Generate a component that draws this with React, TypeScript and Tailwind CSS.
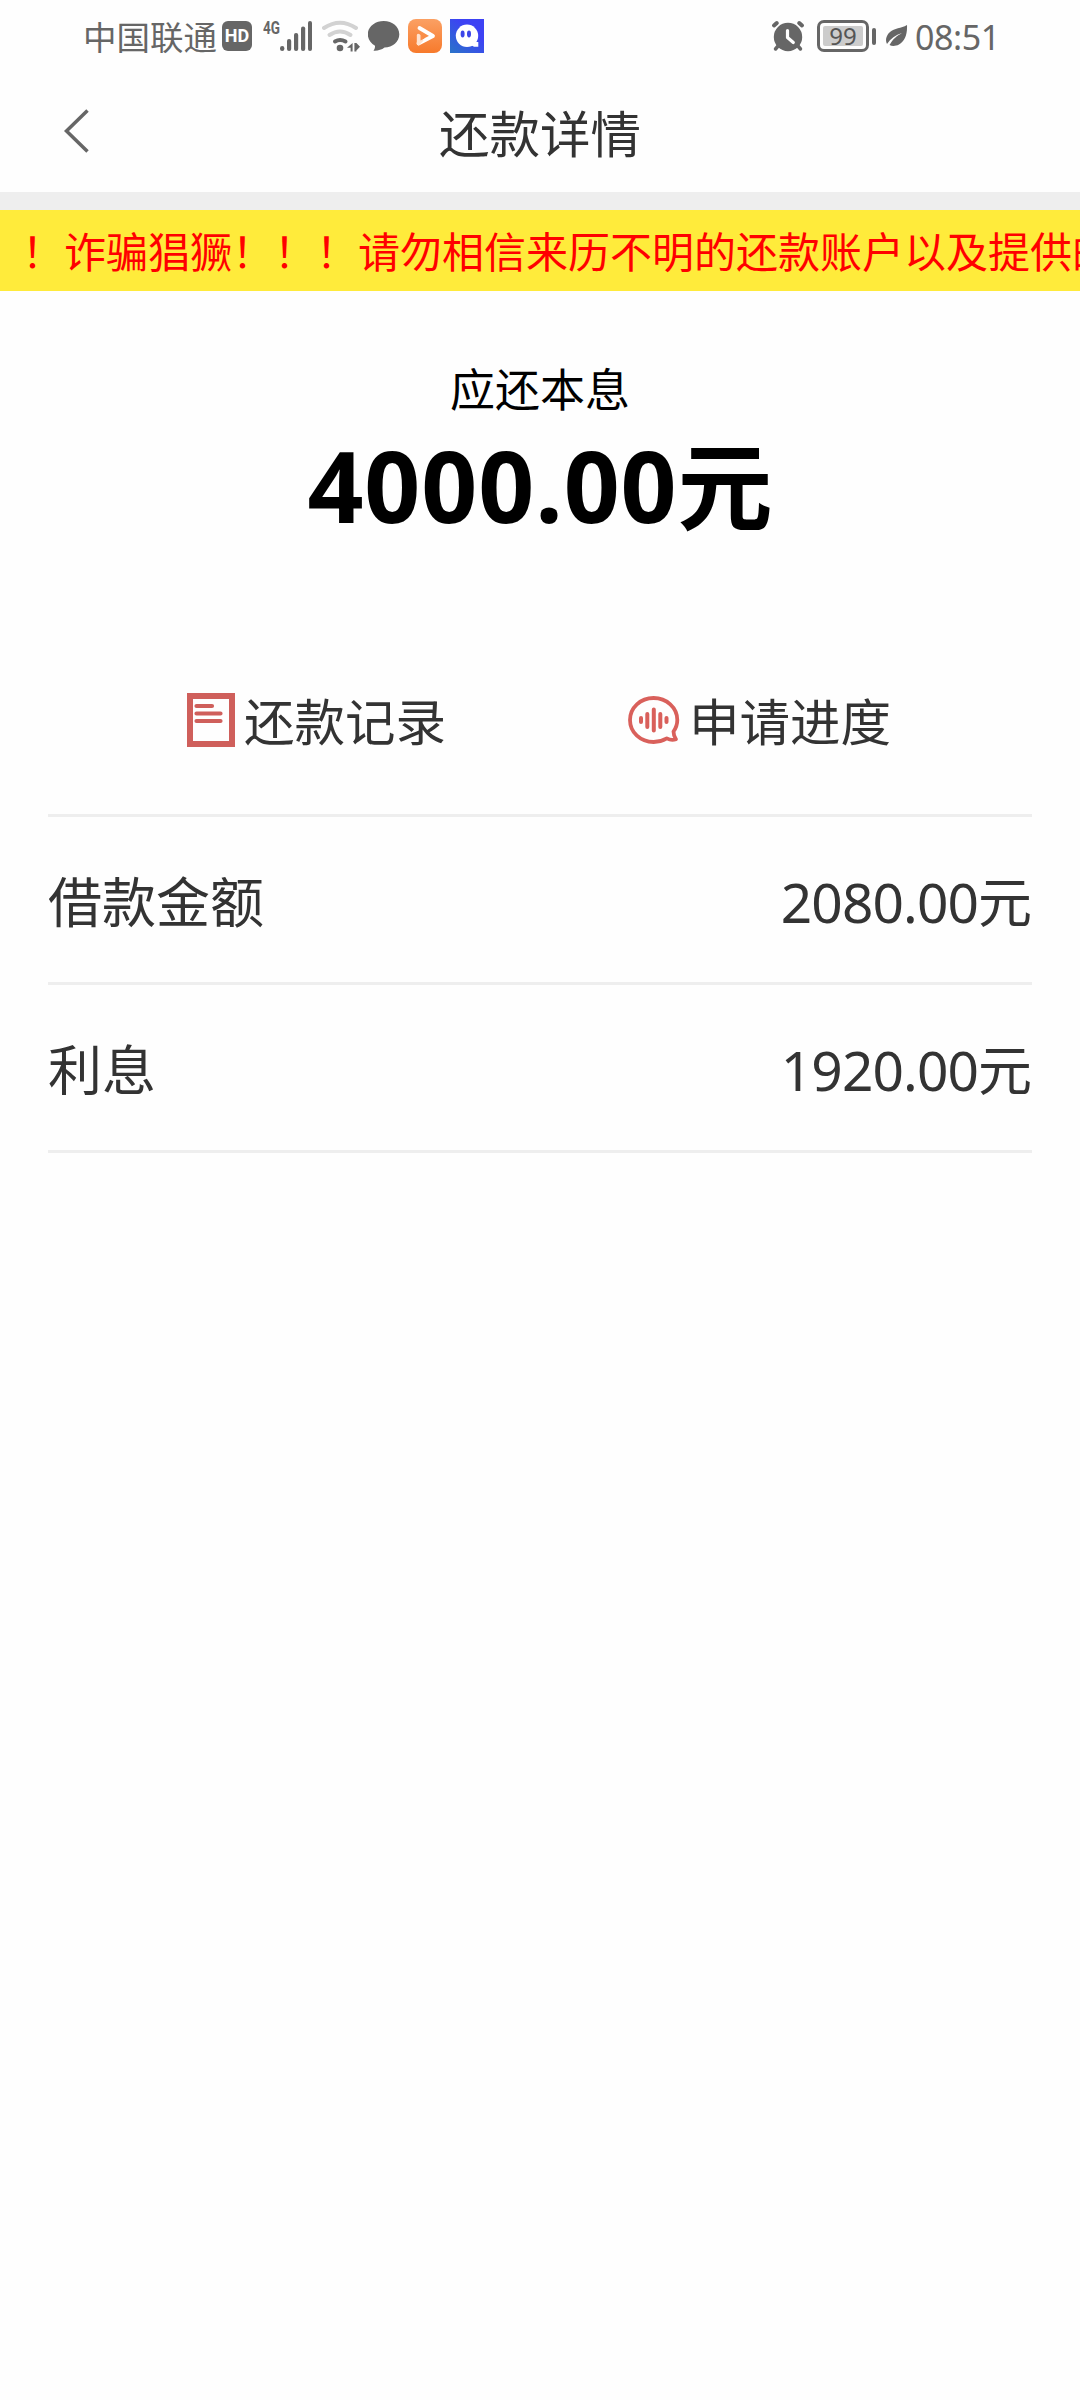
import React from "react";

const ROWS = [
  { label: "借款金额", value: "2080.00" },
  { label: "利息", value: "1920.00" },
];

const NOTICE = "！诈骗猖獗！！！请勿相信来历不明的还款账户以及提供的";

function SignalIcon() {
  return (
    <svg className="w-8 h-[30px]" viewBox="280 21 32 30" fill="#666">
      <rect x="280" y="46" width="4.4" height="5" rx="2.2" />
      <rect x="287" y="39" width="4.2" height="12" rx="2" />
      <rect x="294" y="33" width="4.2" height="18" rx="2" />
      <rect x="301" y="26.5" width="4.2" height="24.5" rx="2" />
      <rect x="308" y="21" width="4" height="30" rx="2" />
    </svg>
  );
}

function WifiIcon() {
  return (
    <svg className="w-[38px] h-8" viewBox="322 20 38 32" fill="none" strokeLinecap="round">
      <path d="M324 28Q340 17.500 356 28" stroke="#d2d2d2" strokeWidth="4" />
      <path d="M329.500 35Q340 28 350.500 35" stroke="#d2d2d2" strokeWidth="4" />
      <path d="M335 41.500Q340 38.500 345.500 41.500" stroke="#666" strokeWidth="4" />
      <circle cx="340" cy="48" r="3.300" fill="#666" />
      <path d="M347 47.800L352.600 43V51.500H350.600V47.800ZM354.400 43H356.400L360 46.800L356.400 50.500V51.500H354.400Z" fill="#666" />
    </svg>
  );
}

function BubbleIcon() {
  return (
    <svg className="w-8 h-[30px]" viewBox="368 21 32 30" fill="#666">
      <path d="M383.700 21C392.500 21 399.300 26.900 399.300 34.200C399.300 42 392.500 47.300 384.500 47.600C381.500 50 377.500 51 373.500 50.700C374.500 49.500 375.200 47.500 375 45.700C370.700 43.300 367.800 39.300 367.800 34.200C367.800 26.900 375 21 383.700 21Z" />
    </svg>
  );
}

function VideoAppIcon() {
  return (
    <svg className="w-[34px] h-[34px]" viewBox="0 0 34 34">
      <defs>
        <linearGradient id="video" x1="0" y1="0" x2="0" y2="1">
          <stop offset="0" stopColor="#fba063" />
          <stop offset="1" stopColor="#f77a2c" />
        </linearGradient>
      </defs>
      <rect width="34" height="34" rx="8" fill="url(#video)" />
      <path d="M11.500 9L25 17L10.500 24.500" fill="none" stroke="#fff" strokeWidth="3.800" strokeLinecap="round" strokeLinejoin="round" />
      <path d="M8.800 16V24.500Q9 27 11.500 26L15.500 21.500L12 15.500Q9.500 14 8.800 16Z" fill="#ffe3cf" />
      <path d="M12.500 16.500L16.500 19.500L12.500 21.500Z" fill="#fa8f4c" />
    </svg>
  );
}

function GhostAppIcon() {
  return (
    <svg className="w-[34px] h-[34px]" viewBox="0 0 34 34">
      <defs>
        <linearGradient id="ghost" x1="0" y1="1" x2="0.6" y2="0.3">
          <stop offset="0" stopColor="#2a74c8" />
          <stop offset="1" stopColor="#3d42f4" />
        </linearGradient>
      </defs>
      <rect width="34" height="34" fill="url(#ghost)" />
      <circle cx="17" cy="16.800" r="11.200" fill="#fff" />
      <path d="M19 25L26 20L25.500 23H28.300V27.800H24Z" fill="#fff" />
      <ellipse cx="12.600" cy="15" rx="2" ry="3.400" fill="#3c46e8" />
      <ellipse cx="19" cy="15" rx="2" ry="3.400" fill="#3c46e8" />
    </svg>
  );
}

function AlarmIcon() {
  return (
    <svg className="w-[34px] h-8" viewBox="771 20 34 32" fill="none" strokeLinecap="round">
      <circle cx="788" cy="37" r="14.200" fill="#666" />
      <path d="M774 25.500L776.800 23M802 25.500L799.200 23" stroke="#666" strokeWidth="4" />
      <path d="M778.500 45.500L775.500 49M797.500 45.500L800.500 49" stroke="#666" strokeWidth="3.500" />
      <path d="M787.500 30.500V37.500L793.300 42.500" stroke="#fff" strokeWidth="3.200" strokeLinejoin="round" />
    </svg>
  );
}

function LeafIcon() {
  return (
    <svg className="w-[22px] h-[22px]" viewBox="886 26 22 22">
      <path d="M907 26C907.500 36 904.500 42.500 899 45.500C895.500 47.300 892 47.300 889.500 46C893 40 896.500 37 902 34C895.500 36 890.500 39.500 887 45C885 41.500 886 36.500 890 33C894.500 29 901 29.500 907 26Z" fill="#666" />
    </svg>
  );
}

function StatusBar() {
  return (
    <div className="flex h-[72px] items-center pl-[83px] pr-[82px] text-[#666]">
      <span className="text-[33.5px] leading-none whitespace-nowrap">中国联通</span>
      <span className="ml-[5px] flex h-[30px] w-[30px] items-center justify-center rounded-[6px] bg-[#666] font-[Roboto] text-[18px] leading-none font-bold text-white">
        HD
      </span>
      <span className="mb-[17px] ml-[11px] w-[17px] origin-left scale-x-75 font-[Roboto] text-[18px] leading-none font-bold">
        4G
      </span>
      <SignalIcon />
      <div className="ml-[10px]"><WifiIcon /></div>
      <div className="ml-2"><BubbleIcon /></div>
      <div className="ml-2"><VideoAppIcon /></div>
      <div className="ml-2"><GhostAppIcon /></div>

      <div className="ml-auto flex items-center">
        <AlarmIcon />
        <div className="ml-3 flex h-8 w-[52px] rounded-[7px] border-[3px] border-[#666] p-[3px]">
          <span className="flex flex-1 items-center justify-center rounded-[2px] bg-[#ccc] font-['Noto_Sans'] text-[24px] leading-none text-[#555]">
            99
          </span>
        </div>
        <div className="ml-[3px] h-[17px] w-1 rounded-full bg-[#666]" />
        <div className="ml-[10px]"><LeafIcon /></div>
        <span className="mt-[2px] ml-[7px] w-[83px] font-['Noto_Sans'] text-[34px] leading-none tracking-[-0.4px] whitespace-nowrap">
          08:51
        </span>
      </div>
    </div>
  );
}

function RecordIcon() {
  return (
    <svg className="w-12 h-[54px]" viewBox="0 0 48 54" fill="none" stroke="#cf5f5b">
      <rect x="3" y="3" width="42" height="48" strokeWidth="6" />
      <path d="M9.500 13H25M9.500 20.500H33.500M9.500 28H33.500" strokeWidth="4.200" strokeLinecap="round" />
    </svg>
  );
}

function ProgressIcon() {
  return (
    <svg className="w-[52px] h-[50px]" viewBox="0 0 52 50" fill="none" stroke="#d9605b" strokeLinecap="round">
      <path
        d="M45.500 36.500C48 33 49.300 29 49.300 25C49.300 12.500 38.500 3 25.600 3C12.500 3 2 12.500 2 25C2 37.500 12.500 47 25.600 47C30.500 47 35 45.600 38.800 43.400C41.500 44.800 45 45.300 48 44.200C46.500 42 45.500 39.500 45.500 36.500Z"
        strokeWidth="3.800"
        strokeLinejoin="round"
      />
      <path d="M13 23V27M19.300 19V32M25.800 14.500V35.500M32.300 19V32M38.500 23V27" strokeWidth="4" />
    </svg>
  );
}

export default function App() {
  return (
    <div className="flex h-[2400px] w-[1080px] flex-col overflow-hidden bg-[#fefefe] font-['Noto_Sans_CJK_SC',sans-serif] text-[#333]">
      <StatusBar />

      <header className="grid h-[120px] grid-cols-[160px_1fr_160px] items-center pb-[2px]">
        <svg className="ml-[62px] w-7 h-12" viewBox="62 107 28 48" fill="none" stroke="#666" strokeWidth="3.500">
          <path d="M87.500 110.500L66.500 131L87.500 151.500" />
        </svg>
        <h1 className="text-center text-[50.5px] leading-none">还款详情</h1>
      </header>

      {/* Scrolling fraud warning */}
      <div className="h-[18px] bg-[#eee]" />
      <div className="flex h-[81px] items-center overflow-hidden bg-[#ffeb3b] pb-[2px] pl-[22px]">
        <p className="text-[42px] leading-none whitespace-nowrap text-[#f00]">{NOTICE}</p>
      </div>

      <section className="flex h-[337px] flex-col items-center pt-[65px] text-black">
        <p className="text-[45px] leading-[64px]">应还本息</p>
        <p className="-mt-[3px] flex items-baseline text-[95px] leading-[130px] font-bold">
          <span className="font-['Noto_Sans'] text-[98px] tracking-[0.9px]">4000.00</span>元
        </p>
      </section>

      <div className="flex h-[186px] items-center pl-[187px] pb-[2px]">
        <div className="flex items-center">
          <RecordIcon />
          <span className="ml-[9px] w-[202px] pb-[2px] text-[50.5px] leading-none whitespace-nowrap">还款记录</span>
        </div>
        <div className="ml-[182px] flex items-center">
          <ProgressIcon />
          <span className="ml-[9px] pb-[2px] text-[50.5px] leading-none">申请进度</span>
        </div>
      </div>

      <ul className="mx-12 border-t-[3px] border-[#eee]">
        {ROWS.map((row) => (
          <li key={row.label} className="flex h-[168px] items-center justify-between border-b-[3px] border-[#eee]">
            <span className="text-[54px] leading-none">{row.label}</span>
            <span className="flex items-baseline pt-[2px] text-[54px] leading-none">
              <span className="font-['Noto_Sans'] text-[55px] tracking-[-0.9px]">{row.value}</span>元
            </span>
          </li>
        ))}
      </ul>
    </div>
  );
}
